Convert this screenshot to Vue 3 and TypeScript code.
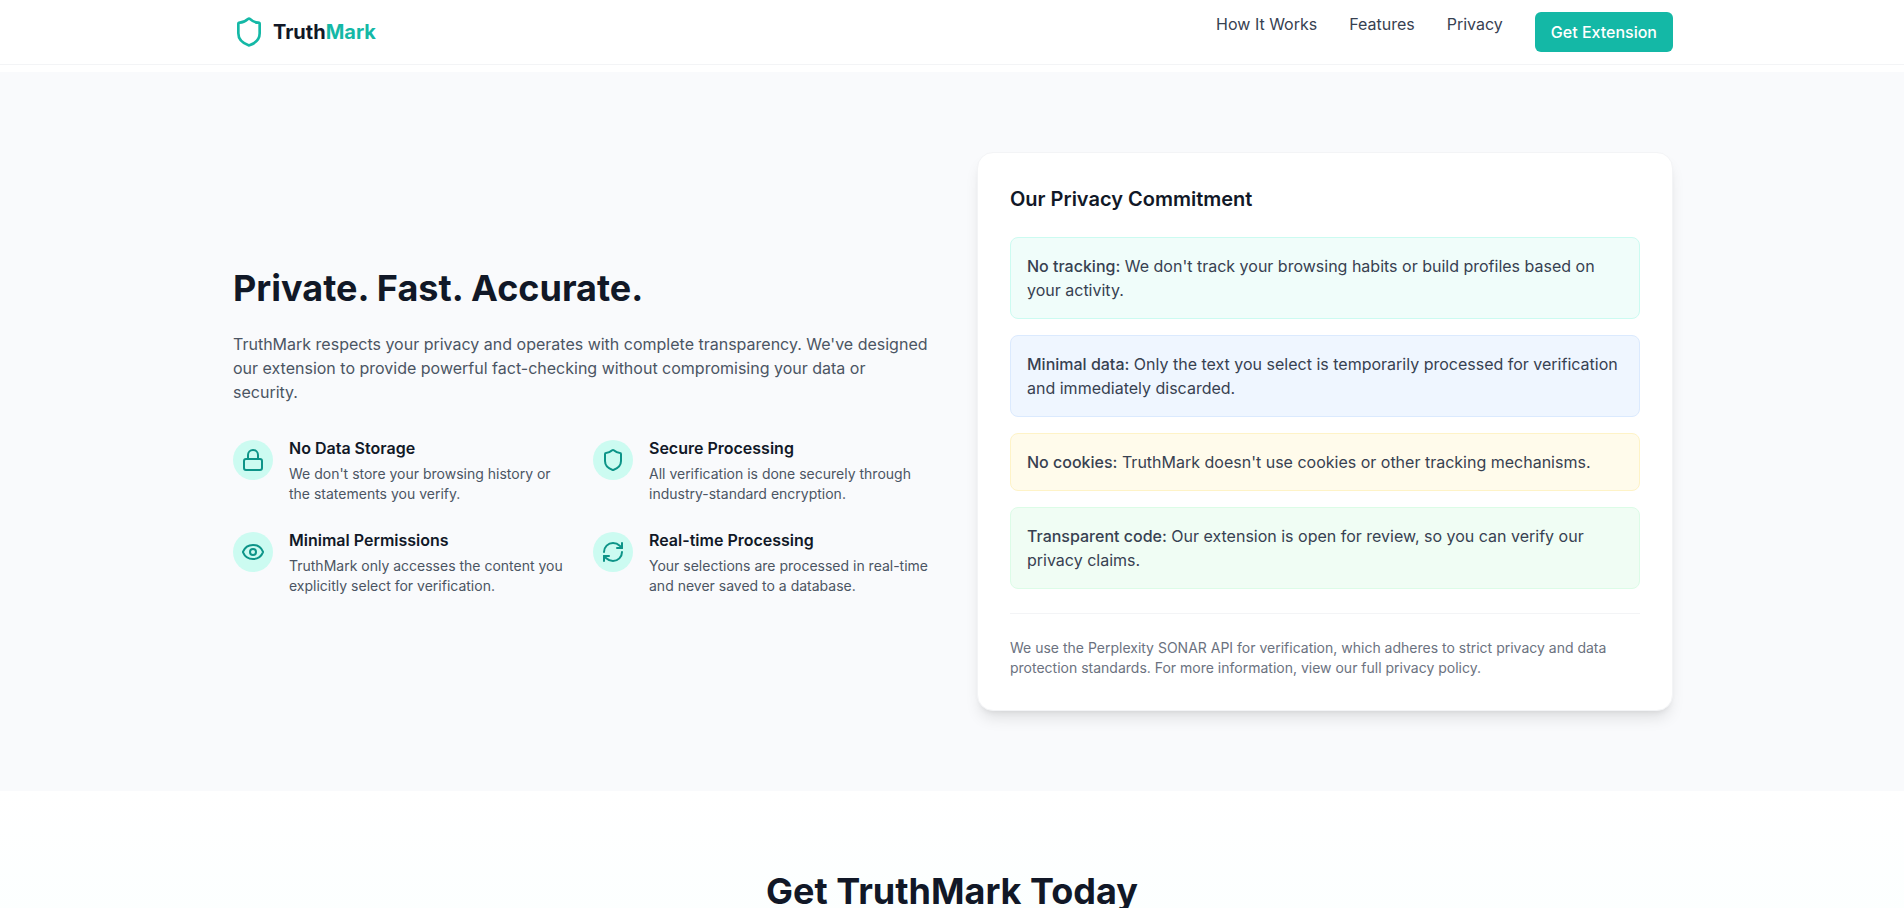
<script setup lang="ts">
interface Feature {
  title: string
  text: string
  paths: string[]
}

interface Commitment {
  label: string
  text: string
  tone: string
}

const shield =
  'M20 13c0 5-3.5 7.5-7.66 8.95a1 1 0 0 1-.67-.01C7.5 20.5 4 18 4 13V6a1 1 0 0 1 1-1c2 0 4.5-1.2 6.24-2.72a1.17 1.17 0 0 1 1.52 0C14.51 3.81 17 5 19 5a1 1 0 0 1 1 1z'

const navLinks: string[] = ['How It Works', 'Features', 'Privacy']

const features: Feature[] = [
  {
    title: 'No Data Storage',
    text: "We don't store your browsing history or the statements you verify.",
    paths: [
      'M5 11h14a2 2 0 0 1 2 2v7a2 2 0 0 1-2 2H5a2 2 0 0 1-2-2v-7a2 2 0 0 1 2-2z',
      'M7 11V7a5 5 0 0 1 10 0v4',
    ],
  },
  {
    title: 'Secure Processing',
    text: 'All verification is done securely through industry-standard encryption.',
    paths: [shield],
  },
  {
    title: 'Minimal Permissions',
    text: 'TruthMark only accesses the content you explicitly select for verification.',
    paths: [
      'M2.062 12.348a1 1 0 0 1 0-.696 10.75 10.75 0 0 1 19.876 0 1 1 0 0 1 0 .696 10.75 10.75 0 0 1-19.876 0',
      'M15 12a3 3 0 1 1-6 0 3 3 0 0 1 6 0z',
    ],
  },
  {
    title: 'Real-time Processing',
    text: 'Your selections are processed in real-time and never saved to a database.',
    paths: [
      'M3 12a9 9 0 0 1 9-9 9.75 9.75 0 0 1 6.74 2.74L21 8',
      'M21 3v5h-5',
      'M21 12a9 9 0 0 1-9 9 9.75 9.75 0 0 1-6.74-2.74L3 16',
      'M8 16H3v5',
    ],
  },
]

const commitments: Commitment[] = [
  {
    label: 'No tracking:',
    text: "We don't track your browsing habits or build profiles based on your activity.",
    tone: 'teal',
  },
  {
    label: 'Minimal data:',
    text: 'Only the text you select is temporarily processed for verification and immediately discarded.',
    tone: 'blue',
  },
  {
    label: 'No cookies:',
    text: "TruthMark doesn't use cookies or other tracking mechanisms.",
    tone: 'amber',
  },
  {
    label: 'Transparent code:',
    text: 'Our extension is open for review, so you can verify our privacy claims.',
    tone: 'green',
  },
]
</script>

<template>
  <div class="page">
    <header class="header">
      <div class="container bar">
        <a class="brand" href="#">
          <svg class="brand-icon" viewBox="0 0 24 24" aria-hidden="true"><path :d="shield" /></svg>
          <span class="brand-name">Truth<span class="accent">Mark</span></span>
        </a>
        <nav class="nav">
          <a v-for="link in navLinks" :key="link" class="nav-link" href="#">{{ link }}</a>
          <button class="cta" type="button">Get Extension</button>
        </nav>
      </div>
    </header>

    <main>
      <section class="privacy">
        <div class="container split">
          <div>
            <h2 class="title">Private. Fast. Accurate.</h2>
            <p class="lead">
              TruthMark respects your privacy and operates with complete transparency. We've designed
              our extension to provide powerful fact-checking without compromising your data or
              security.
            </p>
            <div class="features">
              <article v-for="f in features" :key="f.title" class="feature">
                <div class="badge">
                  <svg class="icon" viewBox="0 0 24 24" aria-hidden="true">
                    <path v-for="d in f.paths" :key="d" :d="d" />
                  </svg>
                </div>
                <div>
                  <h3 class="feature-title">{{ f.title }}</h3>
                  <p class="feature-text">{{ f.text }}</p>
                </div>
              </article>
            </div>
          </div>

          <div class="card">
            <h3 class="card-title">Our Privacy Commitment</h3>
            <div class="notes">
              <p v-for="c in commitments" :key="c.label" class="note" :class="c.tone">
                <strong>{{ c.label }}</strong> {{ c.text }}
              </p>
            </div>
            <p class="footnote">
              We use the Perplexity SONAR API for verification, which adheres to strict privacy and
              data protection standards. For more information, view our full privacy policy.
            </p>
          </div>
        </div>
      </section>

      <section class="download">
        <h2 class="title">Get TruthMark Today</h2>
      </section>
    </main>
  </div>
</template>

<style>
body {
  margin: 0;
  background: #ffffff;
}
</style>

<style scoped>
.page {
  min-height: 100vh;
  font-family: Inter, 'Liberation Sans', sans-serif;
  font-size: 16px;
  line-height: 24px;
  color: #374151;
}

h2,
h3,
p {
  margin: 0;
}

svg {
  display: block;
  fill: none;
  stroke: currentColor;
  stroke-width: 2;
  stroke-linecap: round;
  stroke-linejoin: round;
}

.container {
  box-sizing: border-box;
  max-width: 1490px;
  margin: 0 auto;
  padding: 0 24px 0 26px;
}

.header {
  margin-bottom: 7px;
  border-bottom: 1px solid #f3f4f6;
  background: #ffffff;
}

.bar {
  display: flex;
  align-items: center;
  justify-content: space-between;
  padding-top: 12px;
  padding-bottom: 12px;
}

.brand {
  display: flex;
  align-items: center;
  gap: 8px;
  color: #111827;
  text-decoration: none;
}

.brand-icon {
  width: 32px;
  height: 32px;
  color: #14b8a6;
}

.brand-name {
  font-size: 20px;
  font-weight: 700;
  line-height: 28px;
}

.accent {
  color: #14b8a6;
}

.nav {
  display: flex;
  align-items: flex-start;
  gap: 32px;
}

.nav-link {
  color: #374151;
  text-decoration: none;
}

.cta {
  padding: 8px 16px;
  border: 0;
  border-radius: 6px;
  background: #14b8a6;
  color: #ffffff;
  font: inherit;
  font-weight: 500;
  cursor: pointer;
}

.privacy {
  padding: 80px 0;
  background: #f9fafc;
}

.split {
  display: grid;
  grid-template-columns: 1fr 1fr;
  gap: 48px;
  align-items: center;
}

.title {
  color: #111827;
  font-size: 36px;
  font-weight: 700;
  line-height: 40px;
}

.lead {
  margin: 24px 0 32px;
  color: #4b5563;
}

.features {
  display: grid;
  grid-template-columns: 1fr 1fr;
  gap: 24px;
}

.feature {
  display: flex;
  align-items: flex-start;
  gap: 16px;
}

.badge {
  flex: none;
  margin-top: 4px;
  padding: 8px;
  border-radius: 50%;
  background: #ccfbf1;
  color: #0d9488;
}

.icon {
  width: 24px;
  height: 24px;
}

.feature-title {
  margin-bottom: 4px;
  color: #111827;
  font-size: 16px;
  font-weight: 600;
  line-height: 24px;
}

.feature-text {
  color: #4b5563;
  font-size: 14px;
  line-height: 20px;
}

.card {
  padding: 32px;
  border: 1px solid #f3f4f6;
  border-radius: 16px;
  background: #ffffff;
  box-shadow:
    0 10px 15px -3px rgb(0 0 0 / 10%),
    0 4px 6px -4px rgb(0 0 0 / 10%);
}

.card-title {
  margin-bottom: 24px;
  color: #111827;
  font-size: 20px;
  font-weight: 600;
  line-height: 28px;
}

.notes {
  display: grid;
  gap: 16px;
}

.note {
  padding: 16px;
  border: 1px solid;
  border-radius: 8px;
}

.note strong {
  font-weight: 500;
}

.teal {
  border-color: #ccfbf1;
  background: #f0fdfa;
}

.blue {
  border-color: #dbeafe;
  background: #eff6ff;
}

.amber {
  border-color: #fef3c7;
  background: #fffbeb;
}

.green {
  border-color: #dcfce7;
  background: #f0fdf4;
}

.footnote {
  margin-top: 24px;
  padding-top: 24px;
  border-top: 1px solid #f3f4f6;
  color: #6b7280;
  font-size: 14px;
  line-height: 20px;
}

.download {
  padding: 80px 0;
  background: linear-gradient(to bottom, #ffffff, #fafffe);
  text-align: center;
}
</style>
